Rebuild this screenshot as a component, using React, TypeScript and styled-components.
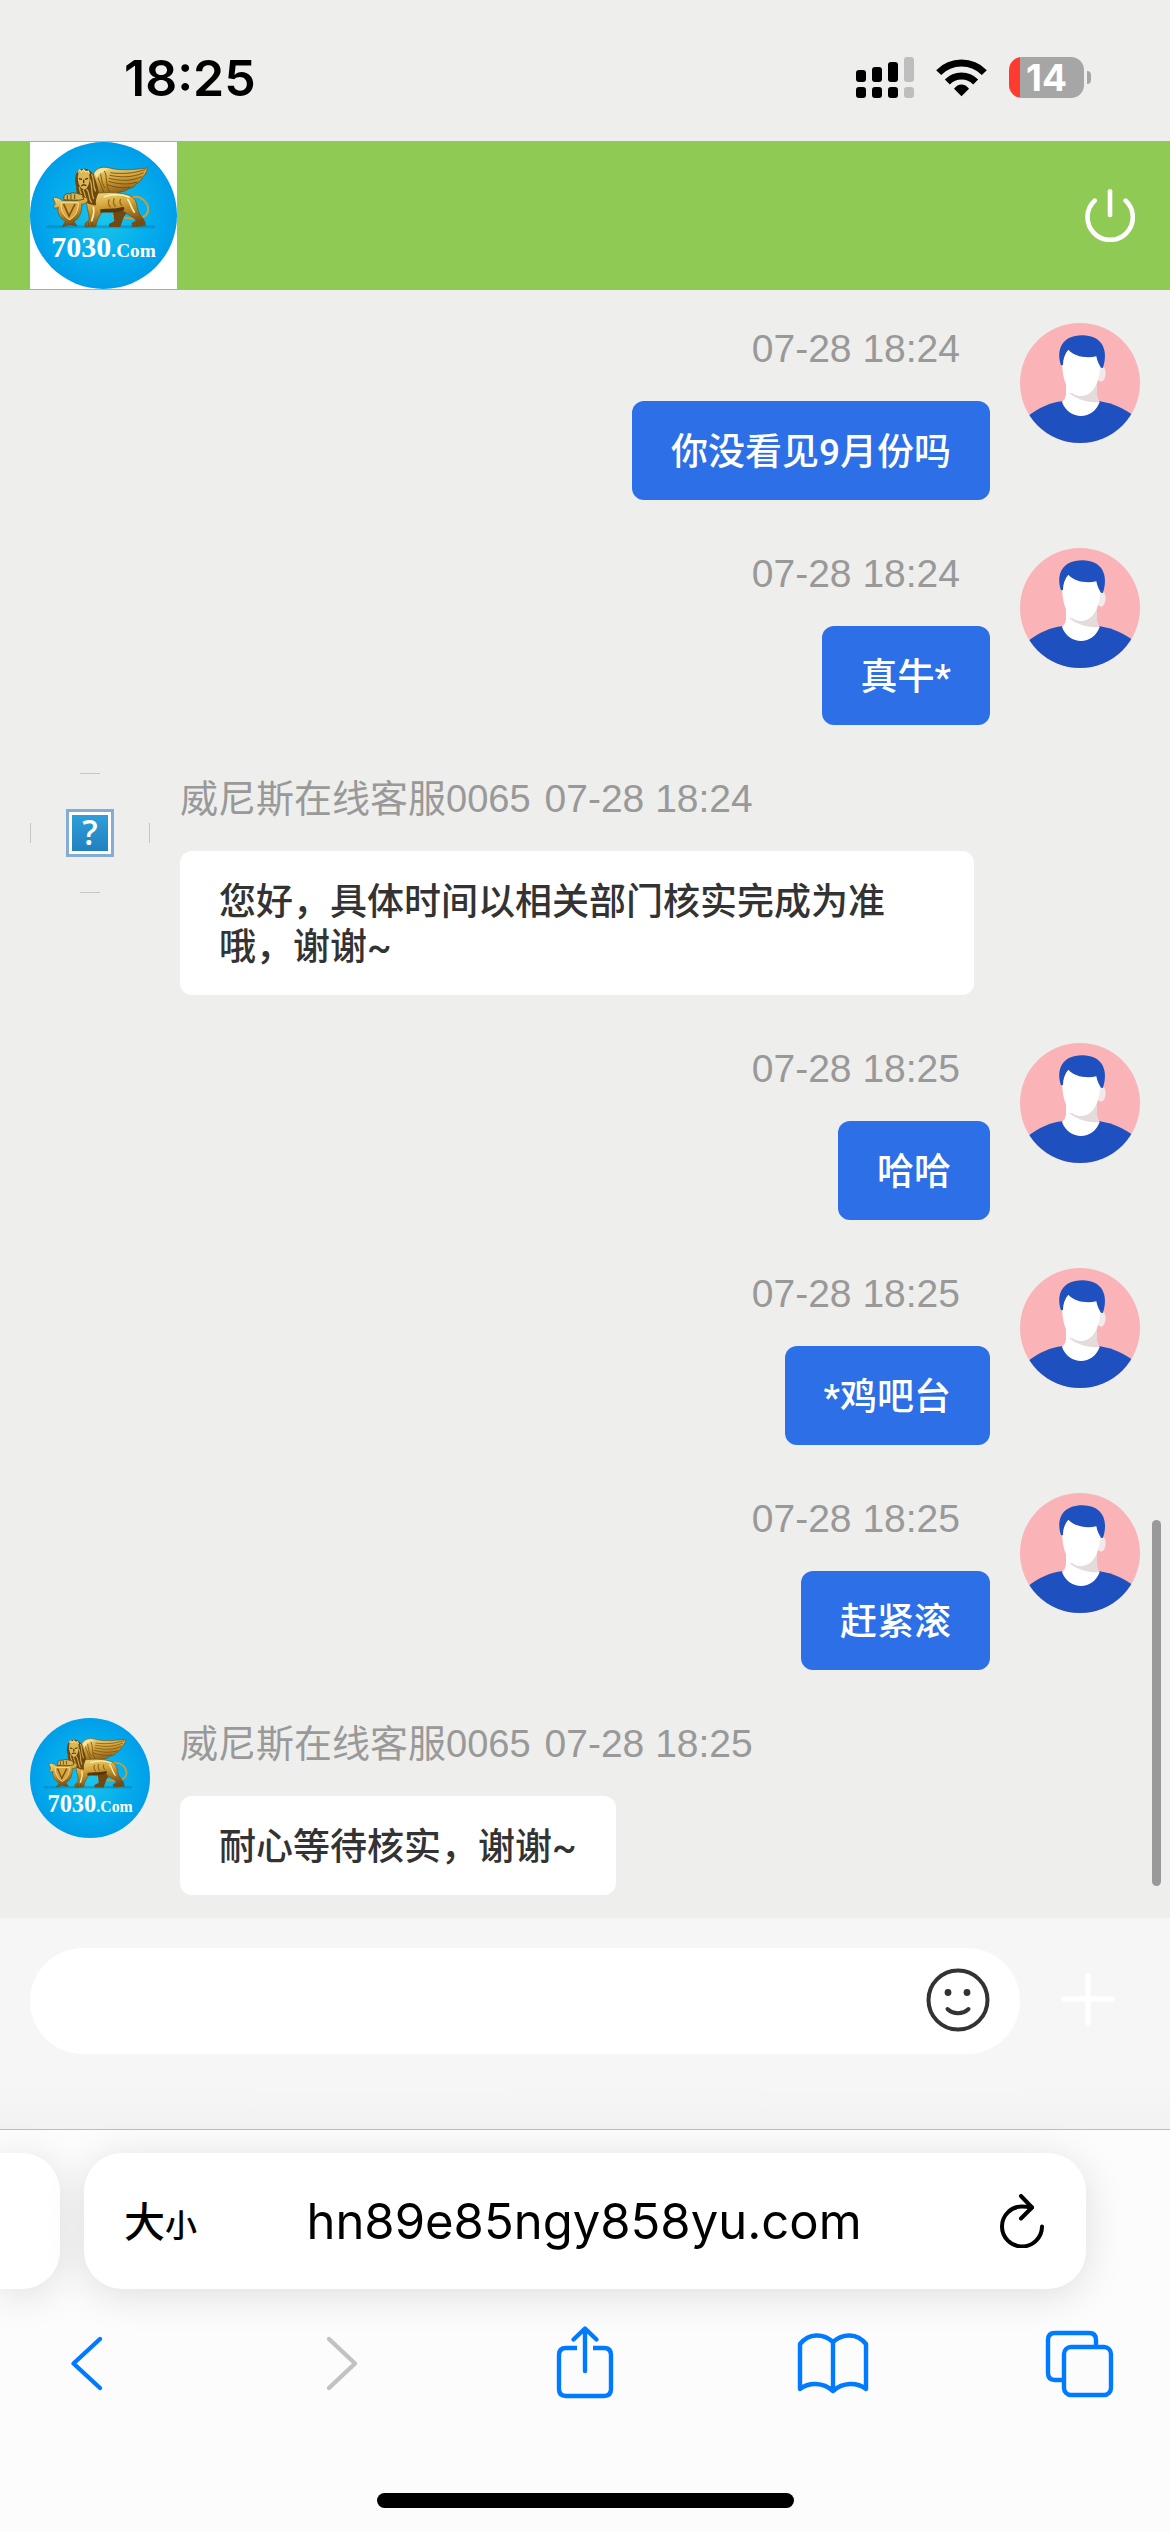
import React, { useId } from "react";
import styled, { createGlobalStyle } from "styled-components";

const sans = `"Liberation Sans", Arial, "Noto Sans CJK SC", sans-serif`;
const bubbleFont = `Roboto, "Noto Sans CJK SC", sans-serif`;
const system = `Inter, "Noto Sans CJK SC", sans-serif`;

const GlobalStyle = createGlobalStyle`
  *, *::before, *::after { box-sizing: border-box; }
  body { margin: 0; background: #eeeeec; font-family: ${sans}; }
  button, input { font: inherit; color: inherit; border: 0; padding: 0; margin: 0; background: none; }
  button { cursor: pointer; }
  svg { display: block; }
`;

const Page = styled.div`
  display: flex;
  flex-direction: column;
  min-height: 100vh;
  background: #eeeeec;
`;

/* ---------- status bar ---------- */

const StatusBar = styled.div`
  display: flex;
  align-items: center;
  justify-content: space-between;
  height: 141px;
  padding: 14px 79px 0 124px;
  font-family: ${system};
`;

const Clock = styled.time`
  font-size: 50px;
  line-height: 60px;
  font-weight: 600;
  color: #000;
`;

const StatusIcons = styled.div`
  display: flex;
  align-items: center;
  gap: 22px;
`;

const BatteryWrap = styled.div`
  display: flex;
  align-items: center;
  gap: 3px;
`;

const Battery = styled.div`
  display: flex;
  align-items: center;
  justify-content: center;
  width: 75px;
  height: 41px;
  border-radius: 13px;
  background: linear-gradient(to right, #ff3b30 11px, #a6a6a6 11px);
  color: #fff;
  font-size: 37px;
  line-height: 41px;
  font-weight: 700;
`;

const BatteryTip = styled.div`
  width: 4px;
  height: 13px;
  border-radius: 0 4px 4px 0;
  background: #a6a6a6;
`;

/* ---------- header ---------- */

const Header = styled.header`
  display: flex;
  align-items: center;
  justify-content: space-between;
  height: 149px;
  padding: 0 35px 0 30px;
  background: #8fca54;
`;

const LogoBox = styled.div`
  width: 147px;
  height: 147px;
  background: #fff;
`;

/* ---------- chat ---------- */

const Chat = styled.main`
  position: relative;
  flex: 1;
  padding: 33px 30px 23px;
`;

const MessageList = styled.ol`
  display: flex;
  flex-direction: column;
  gap: 48px;
  margin: 0;
  padding: 0;
  list-style: none;
`;

const Row = styled.li<{ $mine: boolean }>`
  display: flex;
  flex-direction: ${(p) => (p.$mine ? "row-reverse" : "row")};
  align-items: flex-start;
  gap: 30px;
`;

const Avatar = styled.div`
  flex: none;
  width: 120px;
  height: 120px;
`;

const Column = styled.div<{ $mine: boolean }>`
  display: flex;
  flex: 1;
  min-width: 0;
  flex-direction: column;
  align-items: ${(p) => (p.$mine ? "flex-end" : "flex-start")};
  gap: 26px;
`;

const Meta = styled.div<{ $mine: boolean }>`
  display: flex;
  gap: 14px;
  padding-right: ${(p) => (p.$mine ? "30px" : "0")};
  font-size: 38px;
  line-height: 52px;
  color: #999;
`;

const Stamp = styled.time`
  font-size: 39px;
`;

const Bubble = styled.div<{ $mine: boolean }>`
  max-width: calc(100% - 166px);
  padding: 29px 39px 25px;
  border-radius: 12px;
  background: ${(p) => (p.$mine ? "#2c6fe6" : "#fff")};
  color: ${(p) => (p.$mine ? "#fff" : "#333")};
  font-family: ${bubbleFont};
  font-size: 37px;
  line-height: 45px;
  font-weight: 500;
`;

const ScrollThumb = styled.div`
  position: absolute;
  right: 9px;
  bottom: 32px;
  width: 9px;
  height: 366px;
  border-radius: 5px;
  background: #999;
`;

/* ---------- composer ---------- */

const Composer = styled.form`
  display: flex;
  align-items: flex-start;
  height: 211px;
  padding: 30px 30px 0;
  background: linear-gradient(#f6f6f6 80%, #f2f2f2);
`;

const Field = styled.div`
  display: flex;
  flex: 1;
  align-items: center;
  height: 106px;
  padding: 0 30px 3px 48px;
  border-radius: 53px;
  background: #fff;
`;

const MessageInput = styled.input`
  flex: 1;
  min-width: 0;
  height: 60px;
  font-size: 37px;
  outline: none;
`;

const PlusButton = styled.button`
  display: flex;
  align-items: center;
  justify-content: center;
  width: 120px;
  height: 102px;
  padding-left: 16px;
`;

/* ---------- browser chrome ---------- */

const BrowserBar = styled.footer`
  display: flex;
  flex-direction: column;
  height: 403px;
  padding: 23px 0 24px;
  border-top: 1px solid #bebec0;
  background: #fcfcfc;
  font-family: ${system};
`;

const TabStrip = styled.div`
  display: flex;
  gap: 24px;
  padding-right: 84px;
`;

const TabCard = styled.div`
  display: flex;
  flex: 1;
  min-width: 0;
  align-items: center;
  height: 136px;
  padding: 0 42px 0 40px;
  border-radius: 38px;
  background: #fff;
  box-shadow: 0 6px 40px rgba(0, 0, 0, 0.12);
`;

const PreviousTab = styled.div`
  flex: none;
  width: 60px;
  height: 136px;
  border-radius: 0 38px 38px 0;
  background: #fff;
  box-shadow: 0 6px 40px rgba(0, 0, 0, 0.12);
`;

const TextSizeButton = styled.button`
  display: flex;
  align-items: baseline;
  width: 96px;
  padding-top: 6px;
  font-size: 41px;
  line-height: 60px;
  font-weight: 500;
  color: #000;
`;

const SmallGlyph = styled.span`
  font-size: 32px;
`;

const Address = styled.input`
  flex: 1;
  min-width: 0;
  height: 72px;
  text-align: center;
  font-size: 49px;
  color: #000;
  outline: none;
`;

const ReloadButton = styled.button`
  display: flex;
  justify-content: flex-end;
  width: 96px;
`;

const Toolbar = styled.nav`
  display: flex;
  justify-content: space-between;
  padding: 26px 38px 0;
  color: #007aff;
`;

const ToolButton = styled.button`
  width: 96px;
  height: 96px;
  &:disabled { color: #c2c2c2; }
`;

const HomeIndicator = styled.div`
  align-self: center;
  width: 417px;
  height: 15px;
  margin-top: auto;
  border-radius: 8px;
  background: #000;
`;

/* ---------- drawings ---------- */

function SignalIcon() {
  const tops = [210, 201, 186, 171];
  return (
    <svg width="58" height="41" viewBox="168 171 174 123" aria-hidden="true">
      {tops.map((top, i) => (
        <g key={top} fill={i === 3 ? "#bebebe" : "#000"}>
          <rect x={168 + i * 48} y={top} width="30" height={246 - top} rx="9" />
          <rect x={168 + i * 48} y="261" width="30" height="33" rx="9" />
        </g>
      ))}
    </svg>
  );
}

function WifiIcon() {
  return (
    <svg width="51" height="38" viewBox="408 176 153 114" aria-hidden="true">
      <g fill="none" stroke="#000" strokeWidth="21">
        <path d="M416 217A96 96 0 0 1 553 217" />
        <path d="M442 245A60 60 0 0 1 527 245" />
      </g>
      <path d="M462 265C474 248 495 248 507 265L484.500 288Z" />
    </svg>
  );
}

function PowerIcon() {
  return (
    <svg width="50" height="53" viewBox="855 567 150 159" aria-hidden="true">
      <g fill="none" stroke="#fff" strokeWidth="14" strokeLinecap="round">
        <path d="M884 602A68 68 0 1 0 977 602" />
        <path d="M930 574V645" />
      </g>
    </svg>
  );
}

function BrandLogo() {
  const id = useId().replace(/:/g, "");
  const gold = `gold${id}`;
  const sky = `sky${id}`;
  return (
    <svg width="100%" height="100%" viewBox="15 12 441 441" role="img" aria-label="7030.Com">
      <defs>
        <radialGradient id={sky}>
          <stop offset="0" stopColor="#1cc6ea" />
          <stop offset="0.6" stopColor="#05aeec" />
          <stop offset="1" stopColor="#019ee9" />
        </radialGradient>
        <linearGradient id={gold} x1="0" y1="0" x2="0.300" y2="1">
          <stop offset="0" stopColor="#f0dc84" />
          <stop offset="0.45" stopColor="#d3a238" />
          <stop offset="1" stopColor="#7a4e10" />
        </linearGradient>
      </defs>
      <circle cx="235.500" cy="232.500" r="220.500" fill={`url(#${sky})`} />
      <rect x="65" y="262" width="325" height="9" rx="4" fill="#0878a8" opacity="0.450" />
      {/* wing */}
      <path
        d="M205 108C214 86 238 84 262 92C295 98 335 94 367 90C366 104 358 114 352 118C350 128 342 134 334 137C330 146 320 150 311 152C300 160 288 162 276 164L262 178L222 182Z"
        fill={`url(#${gold})`}
        stroke="#6b4912"
        strokeWidth="2"
      />
      <g fill="none" stroke="#6b4a12" strokeWidth="2.500">
        <path d="M362 94C325 108 285 108 256 104" />
        <path d="M356 104C320 120 285 118 254 112" />
        <path d="M350 116C320 130 285 129 252 121" />
        <path d="M336 132C312 141 280 139 250 130" />
        <path d="M316 148C295 151 270 149 247 140" />
        <path d="M222 98C232 112 226 132 240 150M236 96C250 114 238 140 256 164M215 110L238 166" />
      </g>
      <path d="M208 106C218 90 238 88 252 94C236 98 222 106 216 122Z" fill="#f3e3a0" />
      {/* tail */}
      <path
        d="M318 179C350 168 373 198 369 220C364 243 335 243 310 241C290 239 278 233 260 234"
        fill="none"
        stroke="#c9a03a"
        strokeWidth="6"
      />
      {/* far legs */}
      <path d="M262 205L308 220L295 240L286 267H252L252 258L268 250Z" fill="#6f4812" />
      {/* body */}
      <path
        d="M188 172C225 160 298 160 322 177C340 190 332 213 346 231C352 240 362 248 361 263L322 266L321 256L334 248C322 232 300 230 288 210C262 222 236 214 228 226C222 238 214 248 213 265L180 267L180 256L192 246C194 222 178 200 188 172Z"
        fill={`url(#${gold})`}
        stroke="#6b4912"
        strokeWidth="2"
      />
      <g fill="none" stroke="#f8eeae" strokeWidth="5" strokeLinecap="round">
        <path d="M238 176C260 168 290 168 312 177" />
        <path d="M308 184C318 196 317 208 328 222" />
        <path d="M205 208C210 222 204 236 200 248" />
      </g>
      <path d="M226 214C252 210 272 214 296 206L298 215C270 226 246 222 226 224Z" fill="#573609" />
      <path d="M253 184Q246 198 257 208M268 181Q261 195 272 206M287 183Q281 193 291 203" fill="none" stroke="#976819" strokeWidth="4" />
      {/* mane and face */}
      <path
        d="M160 97C178 86 200 94 205 112C213 128 218 144 221 162C216 178 210 186 214 202C196 202 182 194 176 186C158 178 152 160 154 148C148 128 150 108 160 97Z"
        fill="#6c470f"
      />
      <path d="M161 103C174 93 190 98 193 110C196 130 190 151 177 155C162 150 154 126 161 103Z" fill="#dcb756" />
      <path
        d="M200 108C209 126 202 142 212 160M194 124C204 140 196 160 206 184M184 152C196 164 188 180 200 194M174 156C182 168 178 178 188 190M163 146C164 164 172 174 175 181"
        fill="none"
        stroke="#d3a945"
        strokeWidth="4"
      />
      <path d="M159 103L164 96L170 102L176 95L182 102L190 99L193 108" fill="none" stroke="#efdd8e" strokeWidth="4" />
      <path d="M162 122L171 124M180 124L189 121M176 125V136M169 144Q176 138 184 143" fill="none" stroke="#4c2f08" strokeWidth="4" />
      {/* shield */}
      <path
        d="M84 180C96 176 104 182 112 188H156C164 180 176 174 186 180C192 192 180 200 170 198C172 226 160 244 146 250L156 264L134 260L112 266L122 250C104 242 96 224 100 208C90 214 82 208 88 202C94 198 88 190 84 180Z"
        fill={`url(#${gold})`}
        stroke="#6b4912"
        strokeWidth="2"
      />
      <path d="M108 194H160C160 222 150 236 134 245C116 236 108 220 108 194Z" fill="#d9a540" stroke="#f3e09a" strokeWidth="3" />
      <path d="M116 198L132 234L150 198" fill="none" stroke="#7b5112" strokeWidth="5" />
      {/* paw on the shield */}
      <path
        d="M118 186C112 172 124 164 134 168C146 160 158 168 172 170L176 184C160 190 140 184 118 186Z"
        fill="#d8b450"
        stroke="#6b4912"
        strokeWidth="3"
      />
      <path d="M127 171V184M138 169V183M149 169V183M190 253V265M201 253V265M335 254V265M347 252V264" stroke="#6b4912" strokeWidth="3" />
      <text x="79" y="357" fill="#fff" fontFamily="Liberation Serif, serif" fontWeight="700" fontSize="90">
        7030
        <tspan fontSize="58">.Com</tspan>
      </text>
    </svg>
  );
}

function VisitorPortrait() {
  const clip = `portrait${useId().replace(/:/g, "")}`;
  return (
    <svg width="100%" height="100%" viewBox="60 69 360 360" role="img" aria-label="我">
      <clipPath id={clip}>
        <circle cx="240" cy="249" r="180" />
      </clipPath>
      <g clipPath={`url(#${clip})`}>
        <rect x="60" y="69" width="360" height="360" fill="#fab3b6" />
        <path d="M80 352C115 322 155 307 186 304H300C338 310 372 325 402 348V430H80Z" fill="#1f50c0" />
        <path d="M198 255V284Q196 298 186 306C196 334 220 348 243 348C268 348 290 332 299 306Q291 300 291 285V240Z" fill="#fff" />
        <path d="M206 278C232 284 270 278 291 240V286Q291 300 298 307C262 308 230 298 206 278Z" fill="#e4dcdb" />
        <ellipse cx="303" cy="220" rx="14" ry="25" fill="#f1eaea" />
        <path d="M187 185C185 240 205 288 243 288C280 288 301 245 301 190L290 140H205Z" fill="#fff" />
        <path
          d="M183 196C168 150 185 106 247 106C305 106 327 148 309 204L303 203C298 195 292 185 289 169C255 176 222 168 205 149C194 162 189 176 189 195Z"
          fill="#1f50c0"
        />
      </g>
    </svg>
  );
}

function MissingPicture() {
  const fill = `missing${useId().replace(/:/g, "")}`;
  return (
    <svg width="120" height="120" viewBox="0 0 120 120" role="img" aria-label="?">
      <linearGradient id={fill} x1="0" y1="0" x2="0" y2="1">
        <stop offset="0" stopColor="#2f9fd8" />
        <stop offset="1" stopColor="#2180c0" />
      </linearGradient>
      <path d="M50 0.500H70M50 119.500H70M0.500 50V70M119.500 50V70" stroke="#c6c6c4" />
      <rect x="36" y="36" width="48" height="48" fill="#86abd5" />
      <rect x="39" y="39" width="42" height="42" fill="#fff" />
      <rect x="42" y="42" width="36" height="36" fill={`url(#${fill})`} />
      <text x="60" y="72" fill="#fff" textAnchor="middle" fontFamily="Open Sans, sans-serif" fontWeight="600" fontSize="34">
        ?
      </text>
    </svg>
  );
}

function SmileIcon() {
  return (
    <svg width="64" height="64" viewBox="0 0 64 64" aria-hidden="true">
      <g fill="none" stroke="#333" strokeWidth="4" strokeLinecap="round">
        <circle cx="32" cy="32" r="29.500" />
        <path d="M21.500 41C27 46.500 37 46.500 42.500 41" />
      </g>
      <circle cx="22" cy="24.500" r="3.400" fill="#333" />
      <circle cx="41" cy="24.500" r="3.400" fill="#333" />
    </svg>
  );
}

function ReloadIcon() {
  return (
    <svg width="44" height="54" viewBox="0 0 44 54" aria-hidden="true">
      <g fill="none" stroke="#000" strokeWidth="4" strokeLinecap="round" strokeLinejoin="round">
        <path d="M42 32.500A20 20 0 1 1 22 12.500C26 12.500 29 13 32 13.500" />
        <path d="M21 2L32 13.500L21 24.500" />
      </g>
    </svg>
  );
}

const Stroke = ({ children }: { children: React.ReactNode }) => (
  <svg width="96" height="96" viewBox="0 0 96 96" aria-hidden="true">
    <g fill="none" stroke="currentColor" strokeWidth="4.400" strokeLinecap="round" strokeLinejoin="round">
      {children}
    </g>
  </svg>
);

/* ---------- data ---------- */

type Message = {
  from: "visitor" | "agent";
  avatar: "portrait" | "missing" | "brand";
  time: string;
  text: string;
};

const agentName = "威尼斯在线客服0065";

const messages: Message[] = [
  { from: "visitor", avatar: "portrait", time: "07-28 18:24", text: "你没看见9月份吗" },
  { from: "visitor", avatar: "portrait", time: "07-28 18:24", text: "真牛*" },
  { from: "agent", avatar: "missing", time: "07-28 18:24", text: "您好，具体时间以相关部门核实完成为准哦，谢谢~" },
  { from: "visitor", avatar: "portrait", time: "07-28 18:25", text: "哈哈" },
  { from: "visitor", avatar: "portrait", time: "07-28 18:25", text: "*鸡吧台" },
  { from: "visitor", avatar: "portrait", time: "07-28 18:25", text: "赶紧滚" },
  { from: "agent", avatar: "brand", time: "07-28 18:25", text: "耐心等待核实，谢谢~" },
];

const avatars = {
  portrait: VisitorPortrait,
  missing: MissingPicture,
  brand: BrandLogo,
};

function MessageRow({ message }: { message: Message }) {
  const mine = message.from === "visitor";
  const Picture = avatars[message.avatar];
  return (
    <Row $mine={mine}>
      <Avatar>
        <Picture />
      </Avatar>
      <Column $mine={mine}>
        <Meta $mine={mine}>
          {!mine && <span>{agentName}</span>}
          <Stamp>{message.time}</Stamp>
        </Meta>
        <Bubble $mine={mine}>{message.text}</Bubble>
      </Column>
    </Row>
  );
}

export default function App() {
  return (
    <Page lang="zh-CN">
      <GlobalStyle />
      <StatusBar>
        <Clock>18:25</Clock>
        <StatusIcons>
          <SignalIcon />
          <WifiIcon />
          <BatteryWrap>
            <Battery>14</Battery>
            <BatteryTip />
          </BatteryWrap>
        </StatusIcons>
      </StatusBar>

      <Header>
        <LogoBox>
          <BrandLogo />
        </LogoBox>
        <button type="button" aria-label="退出">
          <PowerIcon />
        </button>
      </Header>

      <Chat>
        <MessageList>
          {messages.map((message, i) => (
            <MessageRow key={i} message={message} />
          ))}
        </MessageList>
        <ScrollThumb />
      </Chat>

      <Composer onSubmit={(e) => e.preventDefault()}>
        <Field>
          <MessageInput type="text" aria-label="消息" />
          <button type="button" aria-label="表情">
            <SmileIcon />
          </button>
        </Field>
        <PlusButton type="button" aria-label="更多">
          <svg width="54" height="54" viewBox="0 0 54 54" aria-hidden="true">
            <path d="M27 3V51M3 27H51" stroke="#fff" strokeWidth="5" strokeLinecap="round" />
          </svg>
        </PlusButton>
      </Composer>

      <BrowserBar>
        <TabStrip>
          <PreviousTab />
          <TabCard>
            <TextSizeButton type="button" aria-label="大小">
              <span>大</span>
              <SmallGlyph>小</SmallGlyph>
            </TextSizeButton>
            <Address type="text" aria-label="网址" defaultValue="hn89e85ngy858yu.com" />
            <ReloadButton type="button" aria-label="重新载入">
              <ReloadIcon />
            </ReloadButton>
          </TabCard>
        </TabStrip>
        <Toolbar>
          <ToolButton type="button" aria-label="后退">
            <Stroke>
              <path d="M62 24L35.500 48.500L62 73" />
            </Stroke>
          </ToolButton>
          <ToolButton type="button" aria-label="前进" disabled>
            <Stroke>
              <path d="M41 24L67 48.500L41 73" />
            </Stroke>
          </ToolButton>
          <ToolButton type="button" aria-label="分享">
            <Stroke>
              <path d="M48 14V56M36.500 24.500L48 13.500L59.500 24.500" />
              <path d="M40 33H29Q22 33 22 40V74Q22 81 29 81H67Q74 81 74 74V40Q74 33 67 33H56" strokeLinecap="butt" />
            </Stroke>
          </ToolButton>
          <ToolButton type="button" aria-label="书签">
            <Stroke>
              <path d="M46 76V27C36 18 22 18 13 29V74C22 67 36 67 46 76C56 67 70 67 79 74V29C70 18 56 18 46 27" />
            </Stroke>
          </ToolButton>
          <ToolButton type="button" aria-label="标签页">
            <Stroke>
              <rect x="28" y="32" width="47" height="48" rx="7" />
              <path d="M60 31V25Q60 18 53 18H19Q12 18 12 25V58Q12 65 19 65H27" strokeLinecap="butt" />
            </Stroke>
          </ToolButton>
        </Toolbar>
        <HomeIndicator />
      </BrowserBar>
    </Page>
  );
}
